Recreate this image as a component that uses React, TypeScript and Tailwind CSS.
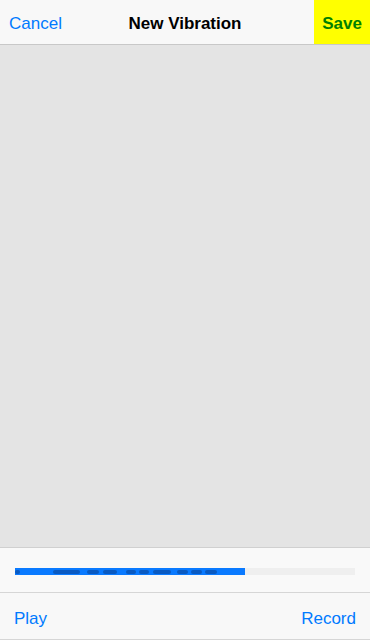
import React from 'react';

// dark segments inside the progress bar: [left, width] in px relative to bar start (x=15)
const segments: [number, number][] = [
  [0, 5],
  [38, 27],
  [72, 12],
  [88, 14],
  [111, 10],
  [124, 10],
  [138, 18],
  [162, 11],
  [176, 11],
  [190, 12],
];

export default function App() {
  return (
    <div
      className="w-[370px] h-[640px] flex flex-col bg-[#f8f8f8] overflow-hidden"
      style={{ fontFamily: '"Liberation Sans", Arial, sans-serif' }}
    >
      {/* Nav bar */}
      <div className="h-[45px] grid grid-cols-[1fr_auto_1fr] items-stretch border-b border-[#c8c8c8] bg-[#f8f8f8]">
        <div className="flex items-center pt-[3px]">
          <button className="pl-[9px] pr-2 text-[17px] text-[#007aff]">Cancel</button>
        </div>
        <div className="flex items-center justify-center pt-[3px] text-[17px] font-semibold text-black">
          New Vibration
        </div>
        <div className="flex justify-end">
          <button className="w-[56px] pt-[3px] bg-[#ffff00] text-[17px] font-semibold text-[#008000] flex items-center justify-center">
            Save
          </button>
        </div>
      </div>

      {/* Canvas */}
      <div className="flex-1 bg-[#e4e4e4]" />

      {/* Timeline */}
      <div className="h-[45px] border-t border-[#d0d0d0] flex items-center px-[15px] bg-[#f9f9f9]">
        <div className="relative w-full h-[7px] bg-[#efefef] mt-[2px]">
          <div className="absolute left-0 top-0 h-full w-[230px] bg-[#0a7aff]">
            {segments.map(([l, w], i) => (
              <div
                key={i}
                className="absolute top-[2px] h-[4px] rounded-full bg-[#0a5ac2]"
                style={{ left: l, width: w }}
              />
            ))}
          </div>
        </div>
      </div>

      {/* Toolbar */}
      <div className="h-[48px] border-t border-b border-[#d6d6d6] flex items-center justify-between px-[14px] pt-[5px] bg-[#f8f8f8]">
        <button className="text-[17px] text-[#007aff]">Play</button>
        <button className="text-[17px] text-[#007aff]">Record</button>
      </div>
    </div>
  );
}
